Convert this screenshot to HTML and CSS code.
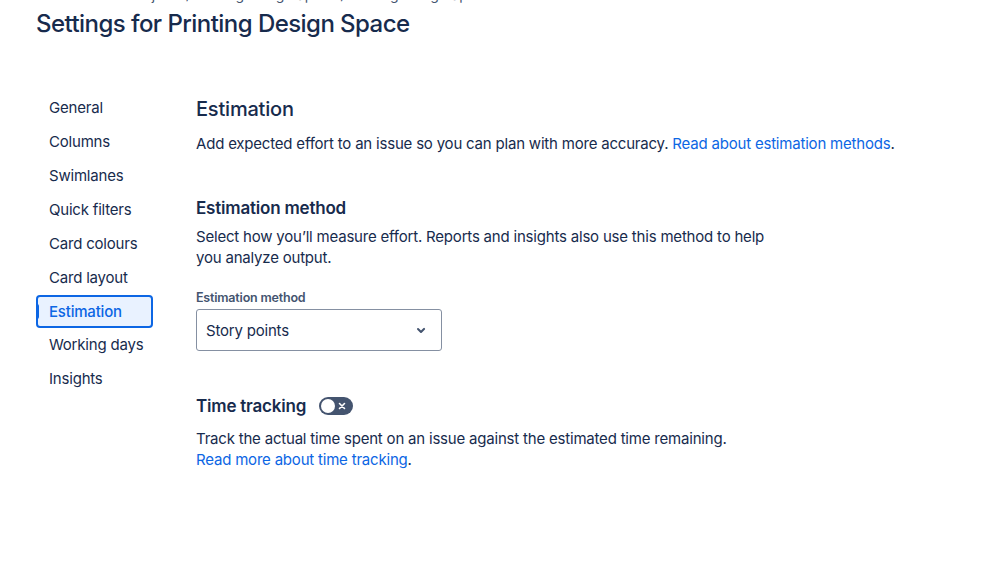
FILE: index.html
```html
<!DOCTYPE html>
<html lang="en">
<head>
    <meta charset="UTF-8">
    <title>Board settings - Estimation</title>
    <link rel="stylesheet" href="styles.css">
</head>
<body>
    <div class="page">
        <div class="header">
            <div class="breadcrumb">Projects / Printing Design Space / Printing Design Space Board</div>
            <h1>Settings for Printing Design Space</h1>
        </div>

        <div class="layout">
            <nav class="sidebar">
                <a class="nav-item">General</a>
                <a class="nav-item">Columns</a>
                <a class="nav-item">Swimlanes</a>
                <a class="nav-item">Quick filters</a>
                <a class="nav-item">Card colours</a>
                <a class="nav-item">Card layout</a>
                <a class="nav-item selected">Estimation</a>
                <a class="nav-item">Working days</a>
                <a class="nav-item">Insights</a>
            </nav>

            <main class="content">
                <h2>Estimation</h2>
                <p class="intro">Add expected effort to an issue so you can plan with more accuracy. <a href="#" class="link">Read about estimation methods</a>.</p>

                <section class="section">
                    <h3>Estimation method</h3>
                    <p class="desc">Select how you’ll measure effort. Reports and insights also use this method to help you analyze output.</p>
                    <label class="field-label">Estimation method</label>
                    <div class="select">
                        <span>Story points</span>
                        <svg width="24" height="24" viewBox="0 0 24 24"><path d="M8.3 10.3a1 1 0 0 1 1.4 0L12 12.6l2.3-2.3a1 1 0 1 1 1.4 1.4l-3 3a1 1 0 0 1-1.4 0l-3-3a1 1 0 0 1 0-1.4z" fill="#44546F"/></svg>
                    </div>
                </section>

                <section class="section">
                    <div class="toggle-row">
                        <h3>Time tracking</h3>
                        <span class="toggle">
                            <span class="knob"></span>
                            <svg width="10" height="10" viewBox="0 0 10 10"><path d="M2.5 2.5l5 5M7.5 2.5l-5 5" stroke="#fff" stroke-width="1.6" stroke-linecap="round"/></svg>
                        </span>
                    </div>
                    <p class="desc">Track the actual time spent on an issue against the estimated time remaining.<br><a href="#" class="link">Read more about time tracking</a>.</p>
                </section>
            </main>
        </div>
    </div>
</body>
</html>
```

FILE: styles.css
```css
body {
    margin: 0;
    font-family: Inter, "Noto Sans", sans-serif;
    color: #172B4D;
    background-color: #ffffff;
    letter-spacing: -0.2px;
}
.page {
    padding: 0 36px;
}
.header {
    margin-top: -15px;
}
.breadcrumb {
    font-size: 14px;
    line-height: 20px;
    color: #44546F;
    padding-left: 94px;
}
h1 {
    font-size: 24px;
    font-weight: 500;
    line-height: 28px;
    margin: 5px 0 0;
    letter-spacing: -0.55px;
}
.layout {
    display: flex;
    gap: 43px;
    margin-top: 54px;
}
.sidebar {
    width: 117px;
    display: flex;
    flex-direction: column;
    gap: 2px;
    flex-shrink: 0;
}
.nav-item {
    height: 32px;
    line-height: 32px;
    padding-left: 13px;
    font-size: 15px;
    color: #172B4D;
    border-radius: 4px;
    position: relative;
}
.nav-item.selected {
    background-color: #E9F2FF;
    border: 2px solid #0C66E4;
    line-height: 29px;
    height: 29px;
    margin: -1px 0;
    padding-left: 11px;
    color: #0C66E4;
    font-weight: 500;
}
.nav-item.selected::before {
    content: "";
    position: absolute;
    left: -2px;
    top: 7px;
    width: 3px;
    height: 15px;
    background-color: #0C66E4;
    border-radius: 0 2px 2px 0;
}
.content {
    flex: 1;
}
h2 {
    font-size: 20px;
    font-weight: 500;
    line-height: 24px;
    margin: 5px 0 0;
}
.intro {
    font-size: 15px;
    line-height: 20px;
    margin: 13px 0 0;
}
.link {
    color: #0C66E4;
    text-decoration: none;
}
.section {
    margin-top: 43px;
}
h3 {
    font-size: 17px;
    font-weight: 600;
    line-height: 22px;
    margin: 0;
}
.desc {
    font-size: 15px;
    line-height: 21px;
    margin: 7px 0 0;
    max-width: 580px;
}
.field-label {
    display: block;
    font-size: 12.5px;
    font-weight: 600;
    color: #44546F;
    margin-top: 22px;
    line-height: 16px;
}
.select {
    width: 246px;
    height: 42px;
    border: 1px solid #8590A2;
    border-radius: 3px;
    margin-top: 3px;
    display: flex;
    align-items: center;
    justify-content: space-between;
    padding: 0 8px 0 9px;
    box-sizing: border-box;
    font-size: 15px;
}
.section + .section {
    margin-top: 44px;
}
.toggle-row {
    display: flex;
    align-items: center;
    gap: 13px;
}
.toggle {
    width: 34px;
    height: 18px;
    border-radius: 9px;
    background-color: #44546F;
    display: inline-flex;
    align-items: center;
    justify-content: space-between;
    padding: 0 6px 0 2px;
    box-sizing: border-box;
}
.knob {
    width: 14px;
    height: 14px;
    border-radius: 50%;
    background-color: #ffffff;
}
.toggle-row + .desc {
    margin-top: 11px;
}
```
